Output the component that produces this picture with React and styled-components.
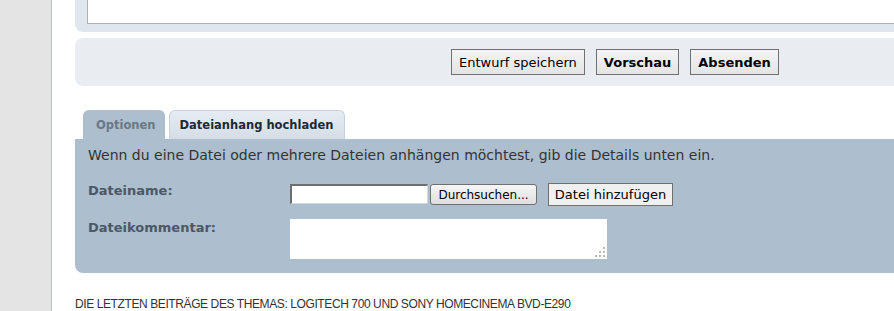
import React from 'react';
import styled, { createGlobalStyle } from 'styled-components';

const GlobalStyle = createGlobalStyle`
  html, body {
    margin: 0;
    padding: 0;
    background: #fff;
    font-family: "DejaVu Sans", Verdana, sans-serif;
    overflow: hidden;
  }
`;

const Page = styled.div`
  display: flex;
  height: 311px;
  width: 894px;
  overflow: hidden;
`;

const Sidebar = styled.div`
  flex: 0 0 51px;
  background: #e4e4e4;
  border-right: 1px solid #b3c5cb;
`;

const Main = styled.div`
  flex: 1;
  min-width: 0;
  padding-left: 23px;
  display: flex;
  flex-direction: column;
`;

const EditorPanel = styled.div`
  flex: 0 0 32px;
  box-sizing: border-box;
  background: #dfe6ee;
  border-bottom-left-radius: 8px;
  padding: 0 0 9px 12px;
  margin-right: -20px;
`;

const EditorBox = styled.div`
  height: 100%;
  background: #fff;
  border: 1px solid #b0b0b0;
  border-top: none;
`;

const ButtonBar = styled.div`
  margin-top: 6px;
  flex: 0 0 48px;
  background: #e9edf1;
  border-radius: 8px 0 0 8px;
  margin-right: -20px;
  display: flex;
  align-items: center;
  gap: 11px;
  padding-left: 376px;
`;

const FormButton = styled.button`
  height: 26px;
  padding: 0 7px;
  font-family: "DejaVu Sans", Verdana, sans-serif;
  font-size: 13px;
  font-weight: ${p => (p.$primary ? 'bold' : 'normal')};
  color: #000;
  background: linear-gradient(#f4f4f4, #e4e4e4);
  border: 1px solid #707070;
  border-radius: 0;
`;

const Tabs = styled.div`
  margin-top: 24px;
  display: flex;
  gap: 4px;
  padding-left: 8px;
`;

const Tab = styled.div`
  height: 29px;
  box-sizing: border-box;
  padding: 0 ${p => (p.$active ? '11px' : '8px')} 0 ${p => (p.$active ? '10px' : '12px')};
  display: flex;
  align-items: center;
  font-size: 11.5px;
  font-weight: bold;
  border-radius: 6px 6px 0 0;
  color: ${p => (p.$active ? '#1d2935' : '#6a7886')};
  background: ${p => (p.$active ? 'linear-gradient(#e6ecf2, #d4dde6)' : '#adbecf')};
  border: 1px solid ${p => (p.$active ? '#c5d2de' : '#adbecf')};
  border-bottom: none;
`;

const UploadPanel = styled.div`
  flex: 0 0 134px;
  box-sizing: border-box;
  background: #adbecf;
  border-bottom-left-radius: 8px;
  margin-right: -20px;
  padding: 7px 13px;
  color: #333;
`;

const Intro = styled.p`
  margin: 0;
  font-size: 14px;
  line-height: 19px;
  color: #333;
`;

const Row = styled.div`
  display: flex;
  align-items: flex-start;
  margin-top: ${p => p.$gap}px;
`;

const Label = styled.div`
  flex: 0 0 202px;
  font-size: 13px;
  font-weight: bold;
  color: #4b5866;
  padding-top: ${p => p.$offset}px;
`;

const FileInput = styled.div`
  margin-top: 1px;
  width: 138px;
  height: 20px;
  box-sizing: border-box;
  background: #fff;
  border-top: 2px solid #6e6e6e;
  border-left: 2px solid #6e6e6e;
  border-right: 1px solid #d8d8d8;
  border-bottom: 1px solid #d8d8d8;
`;

const BrowseButton = styled.button`
  margin: 1px 0 0 2px;
  width: 107px;
  height: 21px;
  padding: 0;
  font-family: "DejaVu Sans", Verdana, sans-serif;
  font-size: 12px;
  color: #000;
  background: linear-gradient(#f6f6f6, #dedede);
  border: 1px solid #707070;
  border-radius: 3px;
`;

const AddButton = styled.button`
  margin-left: 11px;
  width: 125px;
  height: 23px;
  padding: 0;
  font-family: "DejaVu Sans", Verdana, sans-serif;
  font-size: 13px;
  color: #000;
  background: #f0f0f0;
  border: 1px solid #707070;
`;

const Comment = styled.div`
  position: relative;
  width: 317px;
  height: 40px;
  background: #fff;
`;

const Grip = styled.svg`
  position: absolute;
  right: 2px;
  bottom: 2px;
`;

const Heading = styled.h3`
  margin: 24px 0 0;
  font-family: "Liberation Sans", Arial, sans-serif;
  font-size: 12px;
  line-height: 14px;
  font-weight: normal;
  letter-spacing: -0.4px;
  color: #333;
  white-space: nowrap;
`;

export default function App() {
  return (
    <>
      <GlobalStyle />
      <Page>
        <Sidebar />
        <Main>
          <EditorPanel>
            <EditorBox />
          </EditorPanel>
          <ButtonBar>
            <FormButton>Entwurf speichern</FormButton>
            <FormButton $primary>Vorschau</FormButton>
            <FormButton $primary>Absenden</FormButton>
          </ButtonBar>
          <Tabs>
            <Tab>Optionen</Tab>
            <Tab $active>Dateianhang hochladen</Tab>
          </Tabs>
          <UploadPanel>
            <Intro>Wenn du eine Datei oder mehrere Dateien anhängen möchtest, gib die Details unten ein.</Intro>
            <Row $gap={18}>
              <Label $offset={0}>Dateiname:</Label>
              <FileInput />
              <BrowseButton>Durchsuchen...</BrowseButton>
              <AddButton>Datei hinzufügen</AddButton>
            </Row>
            <Row $gap={13}>
              <Label $offset={1}>Dateikommentar:</Label>
              <Comment>
                <Grip width="10" height="10" viewBox="0 0 10 10">
                  <g fill="#b8b8b8">
                    <rect x="8" y="0" width="2" height="2" />
                    <rect x="4" y="4" width="2" height="2" />
                    <rect x="8" y="4" width="2" height="2" />
                    <rect x="0" y="8" width="2" height="2" />
                    <rect x="4" y="8" width="2" height="2" />
                    <rect x="8" y="8" width="2" height="2" />
                  </g>
                </Grip>
              </Comment>
            </Row>
          </UploadPanel>
          <Heading>DIE LETZTEN BEITRÄGE DES THEMAS: LOGITECH 700 UND SONY HOMECINEMA BVD-E290</Heading>
        </Main>
      </Page>
    </>
  );
}
